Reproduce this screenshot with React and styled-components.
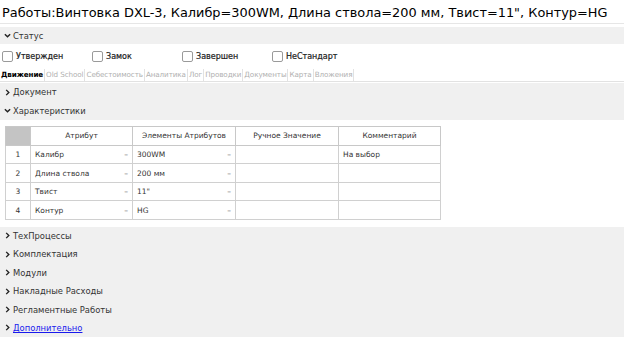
import React from 'react';
import styled, { createGlobalStyle } from 'styled-components';

const GlobalStyle = createGlobalStyle`
	body {
		margin: 0;
		background: #fff;
		font-family: "DejaVu Sans", Verdana, sans-serif;
	}
`;

const Page = styled.div`
	width: 624px;
	height: 347px;
	overflow: hidden;
	display: flex;
	flex-direction: column;
`;

const Title = styled.h1`
	margin: 0;
	height: 23px;
	padding-left: 2px;
	font-size: 12.9px;
	font-weight: normal;
	line-height: 25px;
	color: #000;
	white-space: nowrap;
	border-bottom: 1px solid #e6e6e6;
`;

const Section = styled.div`
	background: #f0f0f0;
	margin-top: ${(p) => p.top || 0}px;
`;

const SectionRow = styled.div`
	display: flex;
	align-items: center;
	gap: 2px;
	height: ${(p) => p.h || 18.4}px;
	padding-left: 4px;
	font-size: 8.4px;
	color: #333;
`;

const Link = styled.a`
	color: #1a1aee;
	text-decoration: underline;
`;

const Checks = styled.div`
	display: flex;
	align-items: center;
	height: 25px;
	padding-left: 2px;
`;

const Check = styled.label`
	display: flex;
	align-items: center;
	gap: 3px;
	width: 90px;
	font-size: 8px;
	color: #222;
	-webkit-text-stroke: 0.2px #222;
`;

const Box = styled.span`
	width: 9px;
	height: 9px;
	border: 1px solid #9a9a9a;
	border-radius: 2px;
	background: #fff;
`;

const Tabs = styled.div`
	display: flex;
	height: 12px;
	border-bottom: 1px solid #e2e2e2;
	margin-bottom: 1px;
`;

const Tab = styled.div`
	padding: 0 1px;
	font-size: 7.2px;
	line-height: 12px;
	color: ${(p) => (p.active ? '#000' : '#b0b0b0')};
	font-weight: ${(p) => (p.active ? 'bold' : 'normal')};
	border-right: 1px solid #e2e2e2;
	letter-spacing: -0.1px;
`;

const TableWrap = styled.div`
	padding: 6px 5px 7px;
`;

const Grid = styled.table`
	border-collapse: collapse;
	table-layout: fixed;
	width: 435px;
	font-size: 7.5px;
	color: #333;
`;

const Th = styled.th`
	height: 18px;
	padding: 0;
	border: 1px solid #c8c8c8;
	font-weight: normal;
	text-align: center;
	background: ${(p) => (p.corner ? '#c4c4c4' : '#fff')};
`;

const Td = styled.td`
	height: 17.5px;
	padding: 0 4px;
	border: 1px solid #d0d0d0;
	text-align: ${(p) => (p.center ? 'center' : 'left')};
`;

const CellFlex = styled.div`
	display: flex;
	justify-content: space-between;
`;

const Dash = styled.span`
	color: #555;
`;

const Chevron = ({ down }) => (
	<svg width="7" height="7" viewBox="0 0 8 8">
		<path
			d={down ? 'M1 2.5 L4 5.5 L7 2.5' : 'M2.5 1 L5.5 4 L2.5 7'}
			fill="none"
			stroke="#222"
			strokeWidth="1.6"
		/>
	</svg>
);

const tabs = ['Движение', 'Old School', 'Себестоимость', 'Аналитика', 'Лог', 'Проводки', 'Документы', 'Карта', 'Вложения'];

const rows = [
	['Калибр', '300WM', 'На выбор'],
	['Длина ствола', '200 мм', ''],
	['Твист', '11"', ''],
	['Контур', 'HG', '']
];

const lower = ['ТехПроцессы', 'Комплектация', 'Модули', 'Накладные Расходы', 'Регламентные Работы'];

const App = () => {
	return (
		<Page>
			<GlobalStyle />
			<Title>Работы:Винтовка DXL-3, Калибр=300WM, Длина ствола=200 мм, Твист=11", Контур=HG</Title>
			<Section top={3}>
				<SectionRow h={17}>
					<Chevron down />
					Статус
				</SectionRow>
			</Section>
			<Checks>
				{['Утвержден', 'Замок', 'Завершен', 'НеСтандарт'].map((c) => (
					<Check key={c}>
						<Box />
						{c}
					</Check>
				))}
			</Checks>
			<Tabs>
				{tabs.map((t, i) => (
					<Tab key={t} active={i === 0}>{t}</Tab>
				))}
			</Tabs>
			<Section>
				<SectionRow>
					<Chevron />
					Документ
				</SectionRow>
				<SectionRow>
					<Chevron down />
					Характеристики
				</SectionRow>
			</Section>
			<TableWrap>
				<Grid>
					<colgroup>
						<col style={{ width: 25 }} />
						<col style={{ width: 102 }} />
						<col style={{ width: 103 }} />
						<col style={{ width: 103 }} />
						<col style={{ width: 102 }} />
					</colgroup>
					<thead>
						<tr>
							<Th corner />
							<Th>Атрибут</Th>
							<Th>Элементы Атрибутов</Th>
							<Th>Ручное Значение</Th>
							<Th>Комментарий</Th>
						</tr>
					</thead>
					<tbody>
						{rows.map((r, i) => (
							<tr key={r[0]}>
								<Td center>{i + 1}</Td>
								<Td>
									<CellFlex>
										{r[0]}
										<Dash>–</Dash>
									</CellFlex>
								</Td>
								<Td>
									<CellFlex>
										{r[1]}
										<Dash>–</Dash>
									</CellFlex>
								</Td>
								<Td />
								<Td>{r[2]}</Td>
							</tr>
						))}
					</tbody>
				</Grid>
			</TableWrap>
			<Section>
				{lower.map((l) => (
					<SectionRow key={l}>
						<Chevron />
						{l}
					</SectionRow>
				))}
				<SectionRow>
					<Chevron />
					<Link href="#">Дополнительно</Link>
				</SectionRow>
			</Section>
		</Page>
	);
};

export default App;
